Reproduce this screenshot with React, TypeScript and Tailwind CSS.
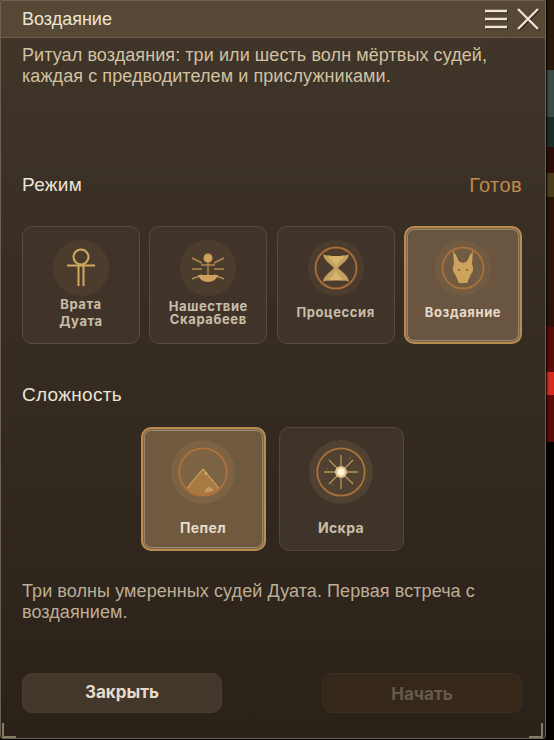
import { ReactNode } from 'react'

function Medallion({ size, children }: { size: 'sm' | 'lg'; children: ReactNode }) {
  return (
    <div
      className={
        size === 'lg'
          ? 'w-[64px] h-[64px] rounded-full bg-[#d9a860]/[0.12] flex items-center justify-center'
          : 'w-[56px] h-[56px] rounded-full bg-[#d9a860]/[0.08] flex items-center justify-center'
      }
    >
      {children}
    </div>
  )
}

function Ankh() {
  return (
    <svg width="32" height="40" viewBox="0 0 32 40" fill="none" stroke="#d1a961">
      <circle cx="16" cy="9" r="7.5" strokeWidth="2" />
      <path d="M2 17.500h28" strokeWidth="2" />
      <path d="M13.500 17v21M18.500 17v21" strokeWidth="2" />
    </svg>
  )
}

function Scarab() {
  return (
    <svg width="36" height="32" viewBox="0 0 36 32" fill="none" stroke="#b08a4c" strokeWidth="1.400">
      <circle cx="18" cy="6" r="4.500" fill="#cda25c" stroke="none" />
      <path d="M18 10v14" />
      <path d="M2 6l10 5M34 6l-10 5M2 17h10M34 17H24M2 27l10-4M34 27l-10-4M11 13h14" />
      <path d="M8 23h20c-1 4-5 7-10 7s-9-3-10-7z" fill="#cda25c" stroke="none" />
    </svg>
  )
}

function Hourglass() {
  return (
    <svg width="44" height="44" viewBox="0 0 44 44" fill="none">
      <circle cx="22" cy="22" r="20.500" stroke="#a8703a" strokeWidth="1.800" />
      <path d="M9 8.500c8 2 18 2 26 0-1 6-8 10-11 13.500 3 3 10 7 11 13.500-8-2-18-2-26 0 1-6 8-10 11-13.500C17 18.500 10 14.500 9 8.500z" fill="#c4a05e" />
      <path d="M22 10c3 0 6-.2 8-.6-1 3-5 7-8 10-3-3-7-7-8-10 2 .4 5 .6 8 .6zM22 25l7 9.500H15z" fill="#d8b36c" />
    </svg>
  )
}

function JackalHead() {
  return (
    <svg width="44" height="44" viewBox="0 0 44 44" fill="none">
      <circle cx="22" cy="22" r="20.500" stroke="#a8703a" strokeWidth="1.800" />
      <path d="M12 4l5 11 5 2 5-2 5-11-1 14c2 4 1 8-1 10l-4 9h-8l-4-9c-2-2-3-6-1-10z" fill="#cda25c" />
      <path d="M14 8l4 9M30 8l-4 9" stroke="#e0bd7e" strokeWidth="0.800" />
      <circle cx="18" cy="24" r="1.100" fill="#8a5f2e" />
      <circle cx="26" cy="24" r="1.100" fill="#8a5f2e" />
    </svg>
  )
}

function Pyramid() {
  return (
    <svg width="50" height="50" viewBox="0 0 50 50" fill="none">
      <path d="M8.500 42L25 22l16.500 20a24 24 0 0 1-33 0z" fill="#a77a43" />
      <path d="M25 22L8.500 42M25 22l16.500 20" stroke="#c9995a" strokeWidth="1.200" />
      <circle cx="28" cy="26.500" r="1.200" fill="#d9b274" />
      <path d="M27 46c0-4 2-6 4-6s4 1 4 4z" fill="#c89a60" />
      <circle cx="25" cy="25" r="23.700" stroke="#b0723d" strokeWidth="1.800" />
    </svg>
  )
}

function Spark() {
  return (
    <svg width="50" height="50" viewBox="0 0 50 50" fill="none">
      <circle cx="25" cy="25" r="23.700" stroke="#a8703a" strokeWidth="1.800" />
      <path d="M25 8v34M8 25h34M13 13l24 24M37 13L13 37" stroke="#b8945a" strokeWidth="1.300" />
      <circle cx="25" cy="25" r="6" fill="#e0c28a" />
      <circle cx="25" cy="25" r="3.800" fill="#fff3d6" />
      <circle cx="34" cy="11" r="0.700" fill="#8a7048" />
      <circle cx="11" cy="22" r="0.700" fill="#8a7048" />
      <circle cx="17" cy="38" r="0.700" fill="#8a7048" />
      <circle cx="36" cy="35" r="0.700" fill="#8a7048" />
    </svg>
  )
}

function ModeCard({ label, active, children, pad }: { label: ReactNode; active?: boolean; children: ReactNode; pad: string }) {
  return (
    <div
      className={
        active
          ? 'w-[118px] h-[118px] rounded-[10px] border-2 border-[#bb8c4e] bg-[#6a5540] shadow-[inset_0_0_0_1px_#7a6244,inset_0_0_0_2px_#978a72] flex flex-col items-center pt-[12px]'
          : 'w-[118px] h-[118px] rounded-[10px] border border-[#5a4c3b] bg-[#40342a] flex flex-col items-center pt-[13px]'
      }
    >
      <Medallion size="sm">{children}</Medallion>
      <div
        className={
          (active ? 'text-[#e6dccb] ' : 'text-[#c9bea8] ') +
          pad +
          ' text-[13px] font-bold text-center font-["Inter",sans-serif] tracking-[0.6px]'
        }
      >
        {label}
      </div>
    </div>
  )
}

function DifficultyCard({ label, active, children }: { label: string; active?: boolean; children: ReactNode }) {
  return (
    <div
      className={
        active
          ? 'w-[125px] h-[124px] rounded-[10px] border-2 border-[#bb8c4e] bg-[#6f5a3f] shadow-[inset_0_0_0_1px_#7d6546,inset_0_0_0_2px_#978a72] flex flex-col items-center pt-[11px]'
          : 'w-[125px] h-[124px] rounded-[10px] border border-[#544739] bg-[#3f3429] flex flex-col items-center pt-[12px]'
      }
    >
      <Medallion size="lg">{children}</Medallion>
      <div className={(active ? 'text-[#e6dccb]' : 'text-[#c9bea8]') + ' mt-[14px] text-[14px] leading-[20px] font-bold tracking-[0.4px] font-["Inter",sans-serif]'}>
        {label}
      </div>
    </div>
  )
}

export default function App() {
  return (
    <div className="relative w-[554px] h-[740px] overflow-hidden bg-[#050201] font-['Liberation_Sans',sans-serif]">
      {/* scene glimpsed behind the window */}
      <div className="absolute right-0 top-0 w-[8px] h-[442px] flex flex-col">
        <div className="h-[70px] bg-[#2a1709]" />
        <div className="h-[47px] bg-[#3a4a44]" />
        <div className="h-[30px] bg-[#1d2a28]" />
        <div className="h-[26px] bg-[#2a0e08]" />
        <div className="h-[24px] bg-[#4a3c18]" />
        <div className="h-[130px] bg-[#2a1408]" />
        <div className="h-[45px] bg-[#5a0c0a]" />
        <div className="h-[23px] bg-[#d42a22]" />
        <div className="h-[47px] bg-[#5a0c0a]" />
      </div>

      <div className="relative w-[546px] h-[739px] flex flex-col border border-[#6d6151] rounded-b-[3px] bg-gradient-to-b from-[#40362a] to-[#2a2119] shadow-[1px_1px_2px_#000]">
        {/* Title bar */}
        <div className="h-[37px] shrink-0 flex items-center justify-between pl-[21px] pr-[5px] bg-[#574835] border-b border-[#6a5c49]">
          <span className="text-[18px] text-[#ece4d6]">Воздаяние</span>
          <div className="flex items-center gap-[9px]">
            <svg width="22" height="20" viewBox="0 0 22 20" fill="none" stroke="#ece4d6" strokeWidth="2.400" className="drop-shadow-[1px_1px_0_#2a2119]">
              <path d="M0 2h22M0 10h22M0 18h22" />
            </svg>
            <svg width="24" height="24" viewBox="0 0 24 24" fill="none" stroke="#ece4d6" strokeWidth="2.400" className="drop-shadow-[1px_1px_0_#2a2119]">
              <path d="M2 2l20 20M22 2L2 22" />
            </svg>
          </div>
        </div>

        <div className="flex-1 flex flex-col pl-[21px] pr-[23px]">
          <p className="mt-[7px] text-[18px] leading-[21px] tracking-[0.08px] text-[#d2c1a2]">
            Ритуал воздаяния: три или шесть волн мёртвых судей,
            <br />
            каждая с предводителем и прислужниками.
          </p>

          <div className="mt-[86px] flex items-center justify-between">
            <span className="text-[19px] leading-[24px] tracking-[0.3px] text-[#ece4d6]">Режим</span>
            <span className="text-[20px] leading-[24px] tracking-[0.4px] text-[#c08a4e]">Готов</span>
          </div>

          <div className="mt-[29px] flex justify-between">
            <ModeCard label={<>Врата<br />Дуата</>} pad="mt-[0px] leading-[17px]">
              <Ankh />
            </ModeCard>
            <ModeCard label={<>Нашествие<br />Скарабеев</>} pad="mt-[4px] leading-[13px]">
              <Scarab />
            </ModeCard>
            <ModeCard label="Процессия" pad="mt-[8px] leading-[16px]">
              <Hourglass />
            </ModeCard>
            <ModeCard label="Воздаяние" active pad="mt-[8px] leading-[16px]">
              <JackalHead />
            </ModeCard>
          </div>

          <div className="mt-[39px] text-[19px] leading-[24px] tracking-[0.3px] text-[#ece4d6]">Сложность</div>

          <div className="mt-[20px] flex justify-center gap-[13px]">
            <DifficultyCard label="Пепел" active>
              <Pyramid />
            </DifficultyCard>
            <DifficultyCard label="Искра">
              <Spark />
            </DifficultyCard>
          </div>

          <p className="mt-[30px] text-[18px] leading-[21px] tracking-[0.08px] text-[#bdae95]">
            Три волны умеренных судей Дуата. Первая встреча с
            <br />
            воздаянием.
          </p>

          <div className="mt-[50px] flex justify-between">
            <button className="w-[200px] h-[40px] rounded-[10px] border border-[#4a3e31] bg-[#43362a] text-[#e6dccb] text-[17px] font-bold font-['Inter',sans-serif]">
              Закрыть
            </button>
            <button className="w-[200px] h-[40px] pt-[3px] rounded-[10px] border border-[#3d3021] bg-[#35281b] text-[#665a4c] text-[17px] font-bold font-['Inter',sans-serif]">
              Начать
            </button>
          </div>
        </div>

        {/* Corner brackets */}
        <div className="absolute left-[1px] bottom-[0px] w-[14px] h-[15px] border-l-2 border-b-2 border-[#87796a]" />
        <div className="absolute right-[2px] bottom-[0px] w-[14px] h-[15px] border-r-2 border-b-2 border-[#87796a]" />
      </div>
    </div>
  )
}
